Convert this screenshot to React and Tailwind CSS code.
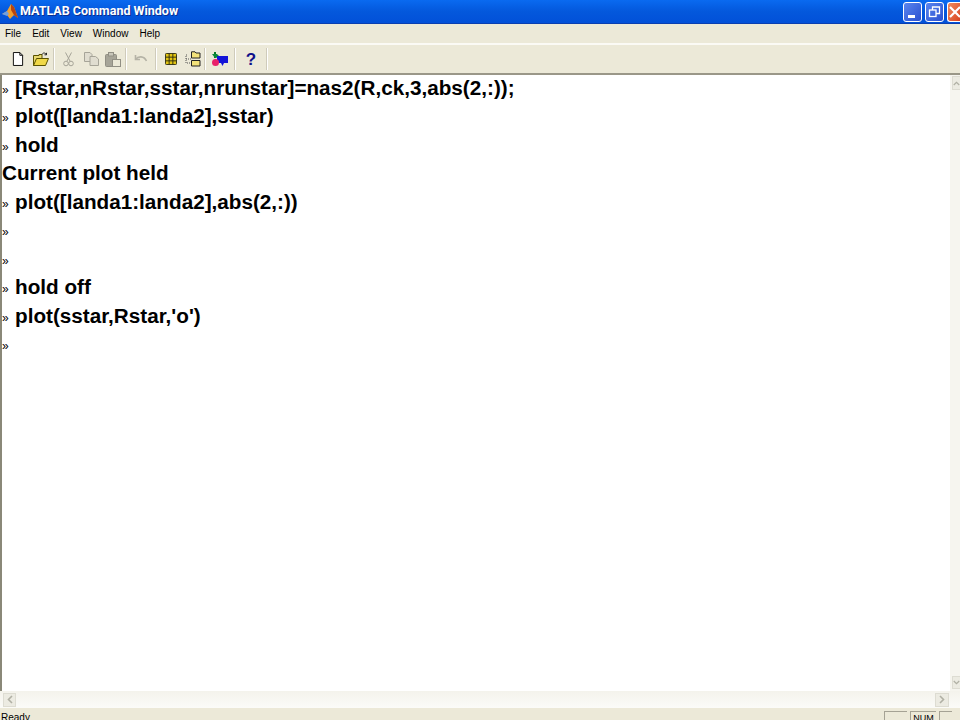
import React from "react";

const Sep = () => <div className="w-[2px] h-[22px] bg-[#cfcbbb] border-r border-white mx-[1px]" />;

const Btn = ({ w = "w-[23px]", children }) => (
  <div className={`${w} h-[24px] flex items-center justify-center`}>{children}</div>
);

const lines = [
  ["p", "[Rstar,nRstar,sstar,nrunstar]=nas2(R,ck,3,abs(2,:));"],
  ["p", "plot([landa1:landa2],sstar)"],
  ["p", "hold"],
  ["o", "Current plot held"],
  ["p", "plot([landa1:landa2],abs(2,:))"],
  ["p", "\u00a0"],
  ["p", "\u00a0"],
  ["p", "hold off"],
  ["p", "plot(sstar,Rstar,'o')"],
  ["p", "\u00a0"],
];

export default function App() {
  return (
    <div className="w-[960px] h-[720px] overflow-hidden flex flex-col bg-[#ece9d8] font-['Liberation_Sans',Arial,sans-serif]">
      {/* title bar */}
      <div className="h-[24px] shrink-0 flex items-center pl-[2px] pr-0 bg-gradient-to-b from-[#0a6af0] via-[#0458dc] to-[#0250d8] border-b border-[#0a3fb0]">
        <svg width="16" height="16" viewBox="0 0 16 16" className="shrink-0">
          <path d="M0 10 L5 7 L9 0 L12 3 L16 14 L12 11 L8 15 L5 11 Z" fill="#f0a030" />
          <path d="M0 10 L5 7 L7 10 L5 12 Z" fill="#6f9fe0" />
          <path d="M9 0 L12 3 L16 14 L12 11 L9 6 Z" fill="#b8440f" />
        </svg>
        <span className="ml-[2px] text-[12.5px] font-bold text-white leading-none font-['Roboto',sans-serif] [text-shadow:1px_1px_0_#0a2f90]">MATLAB Command Window</span>
        <div className="ml-auto flex items-center gap-[3px] h-full">
          <div className="w-[19px] h-[20px] rounded-[3px] border border-white bg-gradient-to-br from-[#5b85ee] to-[#2a4fd0] flex items-end pb-[3px] pl-[4px]">
            <div className="w-[7px] h-[3px] bg-white" />
          </div>
          <div className="w-[19px] h-[20px] rounded-[3px] border border-white bg-gradient-to-br from-[#5b85ee] to-[#2a4fd0] flex items-center justify-center">
            <svg width="13" height="13" viewBox="0 0 13 13" fill="none" stroke="#fff" strokeWidth="1.3">
              <rect x="1.5" y="5" width="6.5" height="6.5" />
              <path d="M4.5 5 V2 H11.5 V8.5 H8" />
            </svg>
          </div>
          <div className="w-[13px] h-[20px] rounded-l-[3px] border border-r-0 border-white bg-gradient-to-br from-[#ee8a60] to-[#d9421c] flex items-center justify-start pl-[1px] overflow-hidden">
            <svg width="12" height="12" viewBox="0 0 12 12" stroke="#fff" strokeWidth="2.2" className="shrink-0">
              <path d="M1 1 L11 11 M11 1 L1 11" />
            </svg>
          </div>
        </div>
      </div>

      {/* menu */}
      <div className="h-[18px] shrink-0 flex items-center pl-[5px] gap-[11px] text-[10px] text-black">
        <span>File</span>
        <span>Edit</span>
        <span>View</span>
        <span>Window</span>
        <span>Help</span>
      </div>
      <div className="h-[2px] shrink-0 bg-[#fbfaf5] mt-[1px]" />

      {/* toolbar */}
      <div className="h-[28px] shrink-0 flex items-center pl-[6px]">
        <Btn>
          <svg width="12" height="14" viewBox="0 0 13 15">
            <path d="M1.5 .5 H8.5 L11.5 3.5 V14.5 H1.5 Z" fill="#fff" stroke="#000" />
            <path d="M8.5 .5 V3.5 H11.5" fill="none" stroke="#000" />
          </svg>
        </Btn>
        <Btn>
          <svg width="16" height="14" viewBox="0 0 16 14">
            <path d="M.5 3.5 H6 V2.5 H9 V13.5 H.5 Z" fill="#e8d870" stroke="#5a5200" />
            <path d="M.5 13.5 L3.5 6.5 H15.5 L12.5 13.5 Z" fill="#f0d848" stroke="#5a5200" />
            <path d="M9 2.5 C10 .5 12 .5 13.5 2.5 M13.5 .8 V2.8 H11.5" fill="none" stroke="#222" />
          </svg>
        </Btn>
        <Sep />
        <Btn w="w-[25px]">
          <svg width="11" height="15" viewBox="0 0 11 15" fill="none" stroke="#a6a498" strokeWidth="1">
            <path d="M2.5 .5 L7 9 M8.5 .5 L4 9" />
            <circle cx="3" cy="11.5" r="2.3" />
            <circle cx="8" cy="11.5" r="2.3" />
          </svg>
        </Btn>
        <Btn w="w-[21px]">
          <svg width="15" height="14" viewBox="0 0 15 14" fill="#e0ddd0" stroke="#a6a498">
            <path d="M.5 .5 H6 L8 2.5 V9.5 H.5 Z" />
            <path d="M6 4.5 H11.5 L14.5 7 V13.5 H6 Z" />
          </svg>
        </Btn>
        <Btn w="w-[22px]">
          <svg width="16" height="15" viewBox="0 0 16 15">
            <rect x=".5" y="2.5" width="11" height="12" rx="1" fill="#a6a498" stroke="#918f84" />
            <rect x="3.5" y=".5" width="5" height="3.5" fill="#c8c6ba" stroke="#918f84" />
            <rect x="7.5" y="7.5" width="8" height="7" fill="#ece9d8" stroke="#918f84" />
          </svg>
        </Btn>
        <Sep />
        <Btn w="w-[26px]">
          <svg width="14" height="10" viewBox="0 0 14 10" fill="none" stroke="#b5b3a6" strokeWidth="1.6">
            <path d="M1.5 1 V5.5 H6" />
            <path d="M1.5 5.5 C4 2 10 1.5 12.5 7" />
          </svg>
        </Btn>
        <Sep />
        <Btn w="w-[25px]">
          <svg width="12" height="12" viewBox="0 0 13 13">
            <rect x=".5" y=".5" width="12" height="12" rx="1" fill="#e2c411" stroke="#2a2a10" />
            <path d="M4.5 .5 V12.5 M8.5 .5 V12.5 M.5 4.5 H12.5 M.5 8.5 H12.5" stroke="#2a2a10" />
          </svg>
        </Btn>
        <Btn w="w-[20px]">
          <svg width="16" height="16" viewBox="0 0 16 16">
            <path d="M2 4 H1 V12 H6 M1 8 H6" fill="none" stroke="#555" strokeDasharray="1 1" />
            <path d="M6.5 3 V.8 H10 L11 2 H15 V7 H6.5 Z" fill="#f3e27a" stroke="#222" />
            <path d="M6.5 15 V9.5 H15 V15 Z" fill="#f3e27a" stroke="#222" />
          </svg>
        </Btn>
        <Sep />
        <Btn w="w-[26px]">
          <svg width="16" height="15" viewBox="0 0 16 15">
            <path d="M3 0 V6" stroke="#0a7a2a" strokeWidth="2" />
            <path d="M0 2 L5 2 L8 5 L3 6 Z" fill="#0a8a3a" />
            <rect x="5" y="4" width="11" height="7" fill="#1414d8" />
            <path d="M9 11 H12 L10.5 14 Z" fill="#1414d8" />
            <circle cx="3.5" cy="10.5" r="3.5" fill="#e8206a" />
          </svg>
        </Btn>
        <Sep />
        <Btn w="w-[28px]">
          <span className="text-[17px] leading-none font-bold text-[#10108a]">?</span>
        </Btn>
        <Sep />
      </div>
      <div className="h-[2px] shrink-0 bg-[#9a9788]" />

      {/* main */}
      <div className="h-[616px] shrink-0 flex bg-white">
        <div className="w-[2px] bg-[#8a8878] shrink-0" />
        <div className="flex-1 -mt-px text-black overflow-hidden">
          {lines.map(([k, t], i) => (
            <div key={i} className="h-[28.44px] leading-[28.44px] text-[20.7px] font-bold whitespace-pre flex items-baseline">
              {k === "p" ? (
                <>
                  <span className="w-[13px] text-[12px] font-normal -translate-y-[1px]">»</span>
                  <span>{t}</span>
                </>
              ) : (
                <span>{t}</span>
              )}
            </div>
          ))}
        </div>
        <div className="w-[10px] shrink-0 bg-[#f6f5ef] flex flex-col justify-between items-end pt-[1px] pb-[2px]">
          <div className="w-[8px] h-[14px] bg-[#ecebe2] border-l border-y border-[#dddcd2] flex items-center justify-center">
            <svg width="7" height="5" viewBox="0 0 9 6" fill="none" stroke="#b0b0a4" strokeWidth="1.6"><path d="M1 5 L4.5 1.5 L8 5" /></svg>
          </div>
          <div className="w-[8px] h-[13px] bg-[#ecebe2] border-l border-y border-[#dddcd2] flex items-center justify-center">
            <svg width="7" height="5" viewBox="0 0 9 6" fill="none" stroke="#b0b0a4" strokeWidth="1.6"><path d="M1 1 L4.5 4.5 L8 1" /></svg>
          </div>
        </div>
      </div>

      {/* horizontal scrollbar */}
      <div className="h-[17px] shrink-0 flex items-center bg-gradient-to-b from-[#f4f3ec] to-[#fbfbf8]">
        <div className="w-[13px] h-[14px] ml-[3px] bg-[#ecebe2] border border-[#dddcd2] flex items-center justify-center">
          <svg width="6" height="9" viewBox="0 0 6 9" fill="none" stroke="#b0b0a4" strokeWidth="1.6"><path d="M5 1 L1.5 4.5 L5 8" /></svg>
        </div>
        <div className="flex-1" />
        <div className="w-[14px] h-[14px] mr-[11px] bg-[#ecebe2] border border-[#dddcd2] flex items-center justify-center">
          <svg width="6" height="9" viewBox="0 0 6 9" fill="none" stroke="#b0b0a4" strokeWidth="1.6"><path d="M1 1 L4.5 4.5 L1 8" /></svg>
        </div>
      </div>

      {/* status */}
      <div className="flex-1 flex items-start pl-[1px] text-[10px] text-black leading-[14px] pt-[3px]">
        <span>Ready</span>
        <div className="ml-auto flex gap-[3px] pr-[8px]">
          <div className="w-[23px] h-[12px] border-l border-t border-[#a5a294]" />
          <div className="w-[26px] h-[12px] border-l border-t border-[#a5a294] text-center text-[9px] leading-[13px]">NUM</div>
          <div className="w-[13px] h-[12px] border-l border-t border-[#a5a294]" />
        </div>
      </div>
    </div>
  );
}
